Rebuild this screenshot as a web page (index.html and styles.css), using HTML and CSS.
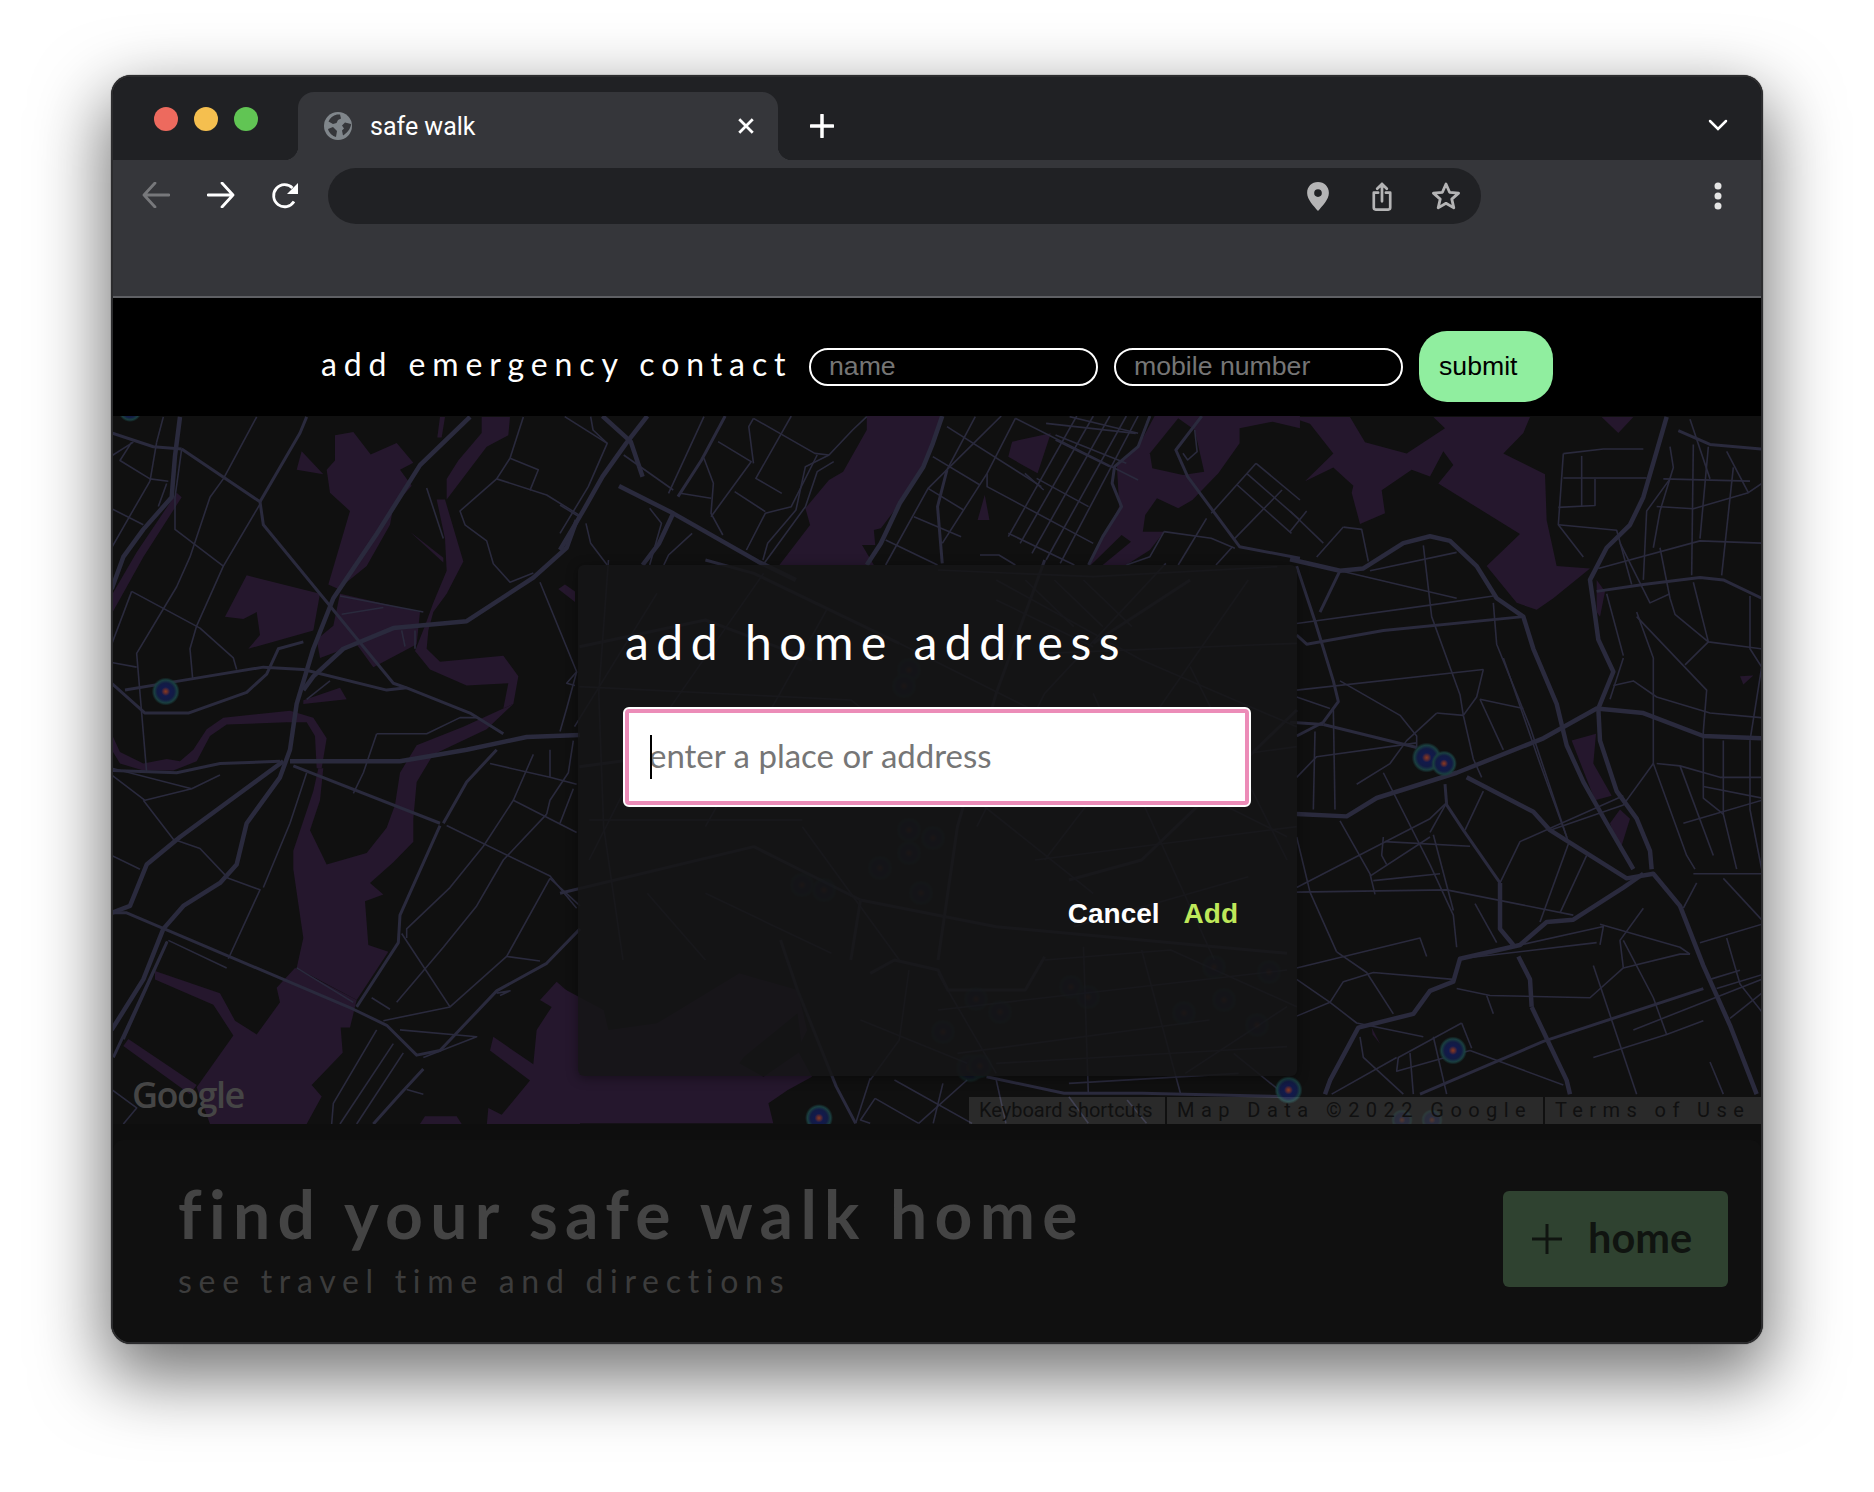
FILE: index.html
```html
<!DOCTYPE html>
<html lang="en">
<head>
<meta charset="utf-8">
<title>safe walk</title>
<link rel="stylesheet" href="styles.css">
</head>
<body>
<div class="stage">
<div class="window">
  <header class="tabstrip">
    <div class="lights"><i class="light red"></i><i class="light yellow"></i><i class="light green"></i></div>
    <div class="tab">
      <svg class="favicon" viewBox="0 0 28 28"><circle cx="14" cy="14" r="14" fill="#80868b"/><path d="M13 2.500C9 3.500 6 6 4.500 9.500L9 12l3.500-1 1.500-3 3-1.500-1-4zM27 12l-6-1.500-3 3 2 3-2 2 1 5c4-2.500 8-7 8-11.500zM4 17l5-2 4 4-1 6c-3.500-1-7-4-8-8z" fill="#35363a"/></svg>
      <span class="tab-title">safe walk</span>
      <svg class="tab-close" viewBox="0 0 16 16"><path d="M2 2l12 12M14 2L2 14"/></svg>
    </div>
    <svg class="newtab" viewBox="0 0 24 24"><path d="M12 1v22M1 12h22"/></svg>
    <svg class="chevron" viewBox="0 0 20 12"><path d="M2 2l8 8 8-8"/></svg>
  </header>
  <nav class="toolbar">
    <svg class="nav dim" viewBox="0 0 28 26"><path d="M27 13H2M13 1L2 13l11 12"/></svg>
    <svg class="nav" viewBox="0 0 28 26"><path d="M1 13h25M15 1l11 12-11 12"/></svg>
    <svg class="reload" viewBox="0 0 28 28"><path class="reload-arc" d="M23 19.500A11 11 0 1 1 21.500 6"/><path class="reload-head" d="M27 1v11H16z"/></svg>
    <div class="omnibox">
      <svg class="omni-icon" viewBox="0 0 22 28"><path fill-rule="evenodd" d="M11 0c6 0 10.500 4.500 10.500 10.500C21.500 17 15 23 11 28 7 23 .5 17 .5 10.500.5 4.500 5 0 11 0zm0 7a3.700 3.700 0 1 0 0 7.400A3.700 3.700 0 0 0 11 7z"/></svg>
      <svg class="omni-icon share" viewBox="0 0 22 30"><path class="line" d="M7 11H2.500v15.500q0 2 2 2h13q2 0 2-2V11H15M11 20V2M6 7l5-5 5 5"/></svg>
      <svg class="omni-icon star" viewBox="0 0 30 30"><path class="line" d="M15 3l3.600 8.300 9 .8-6.800 6 2 8.800L15 22.300l-7.800 4.600 2-8.800-6.800-6 9-.8z"/></svg>
    </div>
    <svg class="kebab" viewBox="0 0 8 28"><circle cx="4" cy="4" r="3.500"/><circle cx="4" cy="14" r="3.500"/><circle cx="4" cy="24" r="3.500"/></svg>
  </nav>
  <section class="contact">
    <span class="contact-label">add emergency contact</span>
    <input class="pill" placeholder="name">
    <input class="pill" placeholder="mobile number">
    <button class="submit">submit</button>
  </section>
  <main class="map">
    <svg class="map-canvas" viewBox="113 416 1648 708" width="1648" height="708">
      <defs>
        <radialGradient id="heat">
          <stop offset="0" stop-color="#8a3b1e"/>
          <stop offset=".14" stop-color="#5e2b30"/>
          <stop offset=".32" stop-color="#121a4c"/>
          <stop offset=".6" stop-color="#121b44"/>
          <stop offset=".82" stop-color="#1a3f40"/>
          <stop offset="1" stop-color="#1a3f40" stop-opacity="0"/>
        </radialGradient>
      </defs>
      <rect x="113" y="416" width="1648" height="708" class="ground"/>
      <!-- left part -->
      <g transform="translate(100 410) scale(.33333 .45918)">
        <g class="water">
          <path d="M705 55L760 48 812 97 890 72 940 115 900 130 935 165 880 210 870 250 800 340 715 390 685 380 750 220 690 180 680 130 705 110z"/>
          <path d="M605 90L670 140 590 130z"/>
          <path d="M440 360L660 400 640 480 445 520 480 490 470 440 430 455 375 450z"/>
          <path d="M720 400L960 440 950 510 820 560 770 510 660 540 650 500 700 470z"/>
          <path d="M610 632L720 605 740 630 610 640z"/>
          <path d="M1145 15L1230 15 1225 55 1160 80 1040 195 1040 150 1075 110 1145 50z"/>
          <path d="M1012 60L1020 15 1035 15 1025 60z"/>
          <path d="M1035 195L1090 330 1040 400 1000 440 985 480 980 520 1020 548 1210 535 1255 580 1240 640 1210 650 1225 595 1100 600 990 565 945 525 975 470 1000 420 1040 350 1035 280 1010 195z"/>
          <path d="M1210 650L1240 640 1160 695 1000 750 950 810 940 890 940 940 880 985 810 1030 850 1055 795 1070 805 1165 865 1180 770 1285 590 1215 610 1150 580 1000 580 960 640 830 655 780 670 780 660 850 630 915 680 990 800 965 860 910 885 860 900 790 950 730 1090 690z"/>
          <path d="M35 705L60 745 130 770 200 760 240 765 280 740 320 695 370 670 570 655 640 670 680 715 665 780 650 780 645 710 620 680 560 680 380 685 330 710 290 765 220 785 130 785 60 770 35 740z"/>
          <path d="M165 1222L360 1270 405 1330 470 1360 540 1290 530 1258 585 1215 770 1285 750 1345 722 1345 728 1400 635 1470 665 1495 620 1555 330 1555 290 1475 400 1362 340 1295 165 1240z"/>
          <path d="M85 1370L290 1470 270 1490 70 1385z"/>
          <path d="M1370 1245L1440 1290 1440 1560 1160 1560 1165 1520 1205 1535 1290 1460 1170 1395 1180 1365 1300 1425 1310 1350 1355 1300 1320 1285z"/>
          <path d="M960 1555L975 1538 1070 1538 1085 1555z"/>
          <path d="M38 440L38 400 110 310 230 180 245 190 130 320z"/>
          <path d="M1375 390L1395 380 1425 395 1425 418z"/>
          <path d="M930 265L1030 322 1030 332z"/>
        </g>
        <g class="rl">
          <path d="M1110 15L960 120 830 270 700 410 640 520 590 640 570 740 540 800 440 900 410 990 360 1030 250 1080 190 1130 130 1240 35 1350"/>
          <path d="M1430 240L1400 300 1300 365 1100 460 880 475 730 520 640 580 610 610"/>
          <path d="M35 1095L90 1080 140 990 240 930 550 765"/>
          <path d="M570 765L900 765 1100 740 1280 712 1440 708"/>
          <path d="M240 15L225 100 215 190 130 260 70 320 35 390"/>
        </g>
        <g class="rm">
          <path d="M35 1095L80 1095 760 1305 860 1340 950 1405 1020 1395 1190 1265 1340 1205 1440 1130"/>
          <path d="M580 775L1020 900"/>
          <path d="M35 595L135 660 265 660 440 615 500 575 535 520 610 505"/>
          <path d="M35 785L230 790 360 770 540 765"/>
          <path d="M245 85L480 200 490 250 660 400 880 595 920 605 1110 660 1210 705"/>
          <path d="M480 200L600 50 620 15"/>
          <path d="M75 610L280 585 490 560 610 565 860 610 920 605"/>
          <path d="M1020 905L900 1100 895 1160 770 1300"/>
          <path d="M1190 740L1100 810 1030 900"/>
          <path d="M970 1435L900 1490 820 1555"/>
          <path d="M70 1370L200 1160 40 1410"/>
          <path d="M35 50L160 80 245 85"/>
        </g>
        <g class="rs">
          <path d="M35 100L100 70"/><path d="M95 70L60 110 150 150 205 155"/><path d="M35 215L130 250"/><path d="M200 160L175 210"/><path d="M150 155L90 230 35 300"/><path d="M170 70L150 155"/><path d="M190 15L170 70"/>
          <path d="M245 85L225 190 225 260 370 340"/><path d="M370 150L330 190 270 320 230 385 110 530 125 660 140 790"/><path d="M470 15L370 150"/><path d="M480 205L370 340 290 470 270 520 278 585"/>
          <path d="M95 395L300 475 400 540 410 565"/><path d="M95 395L35 510"/><path d="M35 550L110 560"/>
          <path d="M1230 105L1315 130 1290 175"/><path d="M1230 105L1190 150 1080 220 1095 250 1160 285 1180 335 1230 375 1300 355"/><path d="M1270 15L1230 105"/><path d="M1190 150L1340 185 1440 230"/>
          <path d="M1320 375L1430 570 1400 595 1425 600"/><path d="M830 705L980 705 1080 670 1130 670"/><path d="M830 705L790 790 760 835"/><path d="M1430 570L1400 650 1380 700"/><path d="M1420 720L1405 790 1350 850 1340 880"/>
          <path d="M1300 750L1240 850 1150 950 1050 1040 920 1130 920 1150"/><path d="M1350 740L1350 800 1430 815"/><path d="M1170 770L1350 800"/><path d="M1240 850L1430 920"/><path d="M1420 825L1380 900"/><path d="M1340 880L1210 980 1130 1080 1030 1170 890 1290"/><path d="M1040 905L1350 1015 1430 1085"/><path d="M1350 1020L1220 1190 1050 1300 850 1330"/><path d="M905 1140L1050 1300"/>
          <path d="M35 970L120 1000"/><path d="M130 850L220 935 300 955 385 1020 480 1045 385 1195"/><path d="M35 795L135 850 275 825 360 795"/><path d="M35 780L275 825"/><path d="M620 790L570 900 490 1040"/><path d="M205 1155L380 1215"/><path d="M590 1215L760 1290"/><path d="M815 1280L870 1305"/><path d="M900 1350L1130 1365 970 1410"/><path d="M1220 1190L1320 1200"/><path d="M830 1350L700 1510 695 1555"/><path d="M880 1380L720 1555"/><path d="M910 1400L770 1555"/><path d="M920 1480L970 1490"/><path d="M35 1480L110 1520 70 1555"/><path d="M1190 1270L1230 1265 1200 1275"/>
          <path d="M720 405L970 440"/><path d="M725 445L850 430"/><path d="M905 480L915 515"/><path d="M945 480L945 520"/><path d="M980 170L1030 280"/><path d="M620 630L690 590"/><path d="M1440 1080L1350 1020"/>
        </g>
      </g>
      <!-- right part -->
      <g transform="translate(1290 410) scale(.33333 .45918)">
        <g class="water">
          <path d="M0 15L180 15 225 70 350 95 465 40 430 15 720 15 700 50 640 95 765 140 770 240 800 340 900 345 790 410 740 435 680 420 590 340 690 270 445 160 490 120 460 90 420 145 365 130 275 175 285 225 210 248 185 180 190 165 130 125 45 155 130 95 60 30 0 15z"/>
          <path d="M935 15L1030 15 985 50z"/><path d="M845 720L918 705 910 770 965 840 915 850z"/><path d="M960 900L990 870 1020 890 990 960z"/><path d="M245 1345L270 1380 248 1360z"/><path d="M1350 580L1390 578 1360 598z"/><path d="M920 370L945 395 930 450 920 440z"/>
        </g>
        <g class="rl">
          <path d="M1130 15L1100 90 1060 190 1020 250 950 300 900 370 910 420 925 500 970 570 925 650 930 720 980 830 1040 890 1080 960 1085 1000"/>
          <path d="M0 325L150 350 220 345 340 290 420 275 480 285 560 340 620 410 700 450 730 520 800 640 830 730 880 810 950 900 1030 1000"/>
          <path d="M20 880L170 885 260 845 500 790 760 715 920 650 1060 660 1240 710 1415 715"/>
          <path d="M530 800L730 875 780 915 1010 1020 1090 1010 1170 1080 1240 1210 1320 1340 1400 1490"/>
          <path d="M1060 1010L1000 1040 850 1110 770 1115 690 1165 510 1195 490 1245 420 1265 370 1315 205 1345 120 1460 105 1490"/>
          <path d="M725 1300L720 1240 685 1190"/><path d="M725 1300L830 1460 840 1490"/><path d="M630 1030L630 1130 670 1165"/>
        </g>
        <g class="rm">
          <path d="M20 710L100 680 145 635 130 590 75 460 20 340"/><path d="M100 685L380 735"/><path d="M0 680L100 685"/><path d="M465 815L470 860 520 915 630 1030"/><path d="M1165 45L1260 75 1415 85"/><path d="M390 1490L760 1375 1240 1260"/><path d="M920 395L1060 380 1230 365 1300 370 1415 410"/><path d="M20 490L50 510 280 480 700 450"/><path d="M90 440L150 350"/>
        </g>
        <g class="rs">
          <path d="M820 95L805 250 880 320"/><path d="M820 95L940 85 1060 85"/><path d="M875 100L875 210"/><path d="M805 212L915 208 915 150"/><path d="M820 148L1070 148"/><path d="M805 250L980 262 1025 380"/><path d="M1200 20L1260 150"/><path d="M1210 75L1205 360"/><path d="M1255 80L1230 280"/><path d="M1330 125L1295 360"/><path d="M1100 210L1210 215 1375 180 1415 160"/><path d="M1140 150L1070 220 1060 370"/><path d="M1120 150L1380 155"/><path d="M1140 80L1150 125 1110 220 1090 300"/><path d="M1310 90L1375 180"/><path d="M990 290L1080 420 1140 400"/><path d="M925 345L1230 285 1415 290"/><path d="M1110 300L1140 410 1155 445 1255 505 1415 520"/><path d="M1185 555L1255 505 1210 375"/><path d="M1040 440L1090 540 1090 770 1190 970 1215 1000"/><path d="M1040 450L1250 610 1240 700 1240 845 1300 880"/><path d="M1000 540L960 630"/><path d="M1000 535L950 400"/><path d="M970 600L1030 590 1100 625 1260 660 1415 670"/><path d="M1100 770L1170 775 1290 800 1415 800"/><path d="M1240 820L1415 845"/><path d="M1300 720L1300 880 1340 1000"/><path d="M1380 720L1380 870 1415 1000"/><path d="M1380 405L1380 520 1415 560 1380 720"/><path d="M1170 775L1270 970"/><path d="M1180 900L1415 850"/><path d="M1090 770L1000 860 780 915"/><path d="M1000 840L690 940 630 1030"/><path d="M835 945L750 1115"/><path d="M890 970L810 1095"/><path d="M720 690L835 940"/><path d="M640 540L750 770 830 930"/><path d="M610 420L620 510 720 690"/><path d="M580 565L560 625 520 665"/><path d="M570 630L700 650"/><path d="M570 630L640 740"/><path d="M520 665L550 760 575 800"/><path d="M400 295L425 450 510 620 520 665"/><path d="M20 465L420 425 610 405"/><path d="M20 610L580 565"/><path d="M20 625L120 650"/><path d="M150 590L330 665 380 710 380 735"/><path d="M20 800L80 755 380 725"/><path d="M75 700L70 870"/><path d="M130 650L135 870"/><path d="M150 350L500 410"/><path d="M240 350L500 310"/><path d="M160 255L215 260 235 330"/><path d="M80 320L160 255"/><path d="M0 220L100 290"/><path d="M0 265L50 220"/><path d="M440 660L520 665"/><path d="M440 660L350 720 300 770 200 815"/><path d="M280 790L420 990 490 1100 500 1170"/><path d="M150 895L240 1010 255 1055"/><path d="M20 930L60 1050 140 1180"/><path d="M20 1050L470 1045 850 1100"/><path d="M20 1040L420 890 470 855"/><path d="M420 920L470 855"/><path d="M280 930L275 970 290 990"/><path d="M285 940L540 950"/><path d="M240 1015L420 930"/><path d="M250 1025L450 1010"/><path d="M430 925L490 1090"/><path d="M525 915L580 830"/><path d="M555 1075L620 1160"/><path d="M20 1215L390 1150 410 1190"/><path d="M140 1180L230 1225 310 1315"/><path d="M20 1240L120 1290 160 1245 250 1225 490 1240"/><path d="M20 1320L120 1290 200 1335 400 1365"/><path d="M500 1260L600 1275 900 1280 1000 1215 990 1155 1060 1085"/><path d="M590 1275L610 1315"/><path d="M1000 1155L1090 1280 1130 1360"/><path d="M910 1210L1040 1490"/><path d="M1000 1215L1170 1185 1200 1185"/><path d="M690 1165L940 1125 930 1165"/><path d="M510 1195L920 1160"/><path d="M930 1120L1170 1170 1200 1185"/><path d="M1230 1160L1415 1120"/><path d="M1180 1085L1220 1030"/><path d="M1300 1020L1415 1110"/><path d="M1210 1010L1415 1010"/><path d="M1310 1150L1350 1250 1415 1310"/><path d="M1260 1240L1350 1220"/><path d="M1280 1260L1415 1230"/><path d="M1320 1325L1415 1270"/><path d="M1260 1420L1300 1490"/><path d="M910 1410L1130 1360 1240 1330"/><path d="M1030 1350L1415 1240"/><path d="M540 1395L820 1470"/><path d="M515 1335L325 1410 320 1440 540 1395"/><path d="M515 1335L545 1390"/><path d="M430 1365L470 1490"/><path d="M360 1400L370 1490"/><path d="M210 1365L220 1410 340 1490"/><path d="M320 1410L125 1490"/>
        </g>
      </g>
      <!-- top middle -->
      <g transform="translate(560 410) scale(.47192 .33333)">
        <g class="water">
          <path d="M650 18L810 18 770 170 720 280 680 355 665 360 668 405 640 405 665 465 465 465 530 345 520 295 570 210 600 185 650 60z"/>
          <path d="M958 95L1040 70 1012 190 980 165 950 140z"/>
          <path d="M885 330L900 255 910 330z"/>
          <path d="M1260 18L1225 110 1180 165 1185 290 1120 465 1200 465 1250 420 1280 365 1235 365 1240 315 1265 265 1310 295 1340 270 1395 190 1440 100 1440 55 1510 35 1568 55 1568 18z"/>
        </g>
        <g class="land">
          <path d="M1310 25L1250 130 1255 175 1320 195 1365 185 1345 60z"/>
          <path d="M1190 375L1210 395 1150 465 1125 465z"/>
        </g>
        <g class="rl">
          <path d="M90 18L150 95 175 200"/><path d="M125 228L240 310 420 455 500 510"/><path d="M185 18L140 100 90 200 50 300 0 420"/><path d="M810 18L790 100 770 170 720 280 680 400 650 465"/><path d="M240 310L210 400 175 465"/>
        </g>
        <g class="rm">
          <path d="M1250 18L1225 110 1175 170 1170 220 1190 290 1150 380 1120 465"/><path d="M1360 18L1305 120 1330 200 1440 410 1568 445"/><path d="M350 18L300 150 250 260"/><path d="M820 180L800 290 810 460"/>
        </g>
        <g class="rs">
          <path d="M10 20L100 100"/><path d="M65 20L70 60 100 100 60 230 0 370"/><path d="M135 135L240 240"/><path d="M305 20L230 250"/><path d="M410 25L400 50 410 160"/><path d="M410 25L540 130 570 135 620 60 650 20"/><path d="M490 18L415 205 470 250"/><path d="M335 95L405 155 320 320"/><path d="M305 145L325 220 320 310 345 375"/><path d="M255 250L320 265"/><path d="M370 245L435 305"/><path d="M570 135L520 170 500 300 440 400 430 450"/><path d="M545 135L490 290 435 310 395 420"/><path d="M580 155L545 185 520 290 430 465"/><path d="M0 285L40 320"/><path d="M55 340L65 400 100 465"/><path d="M190 295L215 340 190 465"/><path d="M280 370L230 435 220 465"/>
          <path d="M820 50L1020 230"/><path d="M880 20L820 180"/><path d="M935 18L780 235 690 465"/><path d="M965 25L905 190 810 400"/><path d="M965 25L1225 210"/><path d="M1030 40L1220 70"/>
          <path d="M1095 18L950 380"/><path d="M1130 18L975 400"/><path d="M1165 18L1000 430"/><path d="M1200 18L1030 450"/><path d="M1225 18L1060 460"/><path d="M1080 20L1225 70"/><path d="M1050 75L1200 160"/><path d="M1050 90L1165 170"/><path d="M1010 205L1120 290"/><path d="M985 190L1025 240"/><path d="M790 140L890 225"/><path d="M905 190L905 230 1130 400"/><path d="M780 235L855 300"/><path d="M750 320L850 380"/><path d="M690 390L800 465"/><path d="M950 370L1090 465"/><path d="M890 435L930 435 965 465"/>
          <path d="M1280 365L1380 385 1430 415"/><path d="M1280 365L1250 440 1200 465"/><path d="M1370 325L1310 465"/><path d="M1425 410L1390 465"/><path d="M1475 160L1380 310"/><path d="M1475 160L1568 270"/><path d="M1455 190L1568 330"/><path d="M1435 225L1550 370"/><path d="M1530 240L1430 385"/><path d="M1345 60L1350 125 1330 150 1320 130"/>
        </g>
      </g>
      <!-- middle, behind the dialog -->
      <g transform="translate(560 560) scale(.48469 .33333)">
        <g class="rm">
          <path d="M300 0L400 40 700 250"/><path d="M1520 450L1300 760 1200 900 1050 960"/><path d="M40 620L350 560 720 560"/><path d="M0 1000L400 860 620 1020 900 1100 1500 1180"/>
          <path d="M1000 0L900 400 820 800 780 1200"/><path d="M620 1020L600 1200"/><path d="M40 260L300 180 520 300"/><path d="M1100 250L1300 60"/>
        </g>
        <g class="rs">
          <path d="M100 0L80 400 90 800 130 1200"/><path d="M200 100L30 500"/><path d="M420 40L200 500 60 900"/><path d="M550 150L300 800"/><path d="M900 60L1200 300 1520 500"/><path d="M1250 10L1000 400 860 800"/><path d="M1420 60L1200 520 1000 900"/><path d="M600 420L1100 1000"/><path d="M700 250L1500 830"/><path d="M1000 280L1520 250"/><path d="M820 700L1520 560"/><path d="M980 900L1520 800"/><path d="M1100 400L1350 1200"/><path d="M1300 320L1500 900"/><path d="M500 800L700 1200"/><path d="M60 780L500 780"/><path d="M780 30L1100 50 1480 20"/><path d="M900 120L1100 260"/><path d="M960 60L1060 200"/><path d="M1020 60L1120 200"/><path d="M1080 60L1180 200"/><path d="M1060 1100L1420 950"/><path d="M40 380L600 420"/><path d="M300 1000L560 1180"/><path d="M180 1000L300 1200"/>
        </g>
      </g>
      <!-- bottom middle -->
      <g transform="translate(560 940) scale(.48469 .33333)">
        <g class="water">
          <path d="M0 140L90 210 100 270 200 250 370 100 490 150 510 270 490 330 520 410 470 450 430 490 440 550 0 550z"/>
        </g>
        <g class="land">
          <path d="M380 350L490 220 500 330 420 410 370 370z"/>
        </g>
        <g class="rm">
          <path d="M455 0L490 150 570 440 610 550"/><path d="M880 410L1040 460 1200 460 1500 470"/><path d="M640 100L690 60 780 90 800 150 960 150 1000 50"/>
        </g>
        <g class="rs">
          <path d="M650 475L740 550"/><path d="M650 475L620 540 640 550"/><path d="M640 415L610 550"/><path d="M690 420L850 550"/><path d="M840 420L740 550"/><path d="M790 430L770 550"/><path d="M1050 430L1400 400"/><path d="M620 240L840 370"/><path d="M780 100L900 400"/><path d="M720 90L700 300 640 420"/><path d="M1080 20L1090 460"/><path d="M1200 30L1280 460"/><path d="M1000 60L1260 30 1520 200"/><path d="M780 210L1500 90"/><path d="M820 340L1340 240"/><path d="M900 370L1500 320"/><path d="M1390 340L1500 470"/><path d="M1500 200L1290 400"/><path d="M1170 480L1210 550"/><path d="M1050 470L1090 550"/><path d="M900 420L920 550"/>
        </g>
      </g>
      <g>
        <circle class="heat" cx="165.700" cy="691.500" r="14"/><circle class="heat" cx="1426.700" cy="757.600" r="15"/><circle class="heat" cx="1444" cy="763.500" r="13"/><circle class="heat" cx="1453" cy="1050.500" r="14"/><circle class="heat" cx="819" cy="1118" r="14"/><circle class="heat" cx="1288.500" cy="1090" r="14"/><circle class="heat" cx="130" cy="410" r="12"/>
      </g>
      <g class="heat-dim">
        <circle class="heat" cx="1402" cy="1120" r="11"/><circle class="heat" cx="1432" cy="1120" r="11"/><circle class="heat" cx="976" cy="999" r="13"/><circle class="heat" cx="1000" cy="1012" r="13"/><circle class="heat" cx="943" cy="1032" r="13"/><circle class="heat" cx="970" cy="1068" r="15"/><circle class="heat" cx="980" cy="1066" r="13"/><circle class="heat" cx="1071" cy="987" r="13"/><circle class="heat" cx="1088" cy="997" r="13"/><circle class="heat" cx="1184" cy="1013" r="13"/><circle class="heat" cx="1224" cy="1000" r="13"/><circle class="heat" cx="1257" cy="1025" r="13"/><circle class="heat" cx="1214" cy="967" r="13"/><circle class="heat" cx="1269" cy="972" r="13"/><circle class="heat" cx="909" cy="670" r="13"/><circle class="heat" cx="904" cy="686" r="13"/><circle class="heat" cx="909" cy="830" r="13"/><circle class="heat" cx="933" cy="838" r="13"/><circle class="heat" cx="909" cy="853" r="13"/><circle class="heat" cx="880" cy="868" r="13"/><circle class="heat" cx="824" cy="890" r="13"/><circle class="heat" cx="802" cy="885" r="13"/><circle class="heat" cx="921" cy="893" r="13"/>
      </g>
    </svg>
    <span class="google">Google</span>
    <div class="attribution">
      <span class="attr-item attr-keys">Keyboard shortcuts</span>
      <span class="attr-item attr-data">Map Data ©2022 Google</span>
      <span class="attr-item attr-terms">Terms of Use</span>
    </div>
    <div class="dialog">
      <h2 class="dialog-title">add home address</h2>
      <div class="address-box"><input class="address" placeholder="enter a place or address"></div>
      <div class="dialog-actions"><button class="action cancel">Cancel</button><button class="action add">Add</button></div>
    </div>
  </main>
  <section class="panel">
    <div class="panel-card">
      <div class="panel-text">
        <h1 class="panel-title">find your safe walk home</h1>
        <p class="panel-sub">see travel time and directions</p>
      </div>
      <button class="home-btn">
        <svg class="home-plus" viewBox="0 0 30 30"><path d="M15 0v30M0 15h30"/></svg>
        <span>home</span>
      </button>
    </div>
  </section>
</div>
</div>
</body>
</html>
```
FILE: styles.css
```css
* { box-sizing: border-box; }
html, body { margin: 0; height: 1492px; overflow: hidden; background: #fff; }
.stage { padding: 75px 0 0 111px; }
.window {
  width: 1652px; height: 1269px; border: 2px solid #2c2c2e; border-radius: 20px; overflow: hidden;
  display: flex; flex-direction: column; background: #101010;
  box-shadow: 0 28px 70px 6px rgba(0,0,0,.55), 0 0 1px #000;
  font-family: "Liberation Sans", Arial, sans-serif;
}
/* tab strip */
.tabstrip { height: 83px; flex: none; background: #202124; display: flex; align-items: flex-start; position: relative; }
.lights { display: flex; gap: 16px; margin: 30px 0 0 41px; }
.light { display: block; width: 24px; height: 24px; border-radius: 50%; }
.red { background: #ed6a5e; } .yellow { background: #f5bf4f; } .green { background: #61c554; }
.tab { width: 480px; height: 68px; margin: 15px 0 0 40px; background: #35363a; border-radius: 16px 16px 0 0; display: flex; align-items: center; padding: 0 23px 0 26px; position: relative; }
.tab::before, .tab::after { content: ""; position: absolute; bottom: 0; width: 14px; height: 14px; }
.tab::before { left: -14px; background: radial-gradient(circle at 0 0, transparent 14px, #35363a 14.500px); }
.tab::after { right: -14px; background: radial-gradient(circle at 100% 0, transparent 14px, #35363a 14.500px); }
.favicon { width: 28px; height: 28px; flex: none; }
.tab-title { margin-left: 18px; color: #fff; font: 400 25px "Roboto", sans-serif; flex: 1; }
.tab-close { width: 18px; height: 18px; fill: none; stroke: #fff; stroke-width: 2.500; }
.newtab { width: 24px; height: 24px; margin: 37px 0 0 32px; fill: none; stroke: #fff; stroke-width: 3.500; stroke-linecap: round; }
.chevron { width: 20px; height: 12px; margin: 42px 33px 0 auto; fill: none; stroke: #fff; stroke-width: 2.500; stroke-linecap: round; }
/* toolbar */
.toolbar { height: 138px; flex: none; background: #35363a; border-bottom: 2px solid #5f6064; display: flex; align-items: flex-start; }
.nav { width: 28px; height: 26px; margin: 22px 0 0 37px; fill: none; stroke: #fff; stroke-width: 2.800; stroke-linecap: round; stroke-linejoin: round; }
.nav.dim { margin-left: 29px; stroke: #77787b; }
.reload { width: 28px; height: 28px; margin: 22px 0 0 36px; }
.reload-arc { fill: none; stroke: #fff; stroke-width: 2.800; }
.reload-head { fill: #fff; }
.omnibox { width: 1153px; height: 56px; margin: 8px 0 0 29px; border-radius: 28px; background: #202124; display: flex; align-items: center; justify-content: flex-end; gap: 34px; padding-right: 20px; }
.omni-icon { width: 30px; height: 29px; fill: #b4b4b5; }
.omni-icon.star { height: 30px; }
.line { fill: none; stroke: #b4b4b5; stroke-width: 2.800; stroke-linejoin: round; stroke-linecap: round; }
.kebab { width: 8px; height: 28px; margin: 22px 0 0 233px; fill: #e4e4e4; }
/* contact bar */
.contact { height: 118px; flex: none; background: #000; display: flex; align-items: center; padding: 19px 0 0 208px; }
.contact-label { width: 488px; color: #fff; font: 400 32px "Lato", sans-serif; letter-spacing: 6.900px; margin-top: -6px; white-space: nowrap; }
.pill { width: 289px; height: 38px; margin: 0 16px 0 0; border: 2px solid #fff; border-radius: 19px; background: #000; padding: 0 18px; color: #fff; font: 26.670px "Liberation Sans", Arial, sans-serif; }
.pill::placeholder { color: #757575; opacity: 1; }
.submit { width: 134px; height: 71px; border: 0; border-radius: 28px; background: #90ee9f; color: #000; font: 26.670px "Liberation Sans", Arial, sans-serif; padding: 0 20px; text-align: left; }
/* map */
.map { height: 708px; flex: none; position: relative; overflow: hidden; background: #101010; }
.map-canvas { display: block; }
.ground { fill: #101010; }
.water path { fill: #25172d; }
.land path { fill: #101010; }
.rl path, .rm path, .rs path { fill: none; stroke: #2a2a3d; vector-effect: non-scaling-stroke; stroke-linejoin: round; }
.rl path { stroke-width: 4.500; }
.rm path { stroke-width: 3; }
.rs path { stroke-width: 1.600; }
.heat { fill: url(#heat); }
.heat-dim { opacity: .4; }
.google { position: absolute; left: 19px; bottom: 7px; color: #454545; font: 600 36px "Open Sans", sans-serif; letter-spacing: -1.500px; line-height: 44px; }
.attribution { position: absolute; right: 0; bottom: 0; height: 27px; display: flex; background: rgba(255,255,255,.11); color: #101010; font: 400 20px/27px "Roboto", sans-serif; }
.attr-item { padding: 0 0 0 10px; white-space: nowrap; overflow: hidden; }
.attr-item + .attr-item { border-left: 2px solid #101010; }
.attr-keys { width: 196px; }
.attr-data { width: 378px; letter-spacing: 6.450px; }
.attr-terms { width: 218px; letter-spacing: 6.400px; }
.dialog { position: absolute; left: 465px; top: 149px; width: 719px; height: 511px; background: rgba(21,21,22,.86); border-radius: 6px; box-shadow: 0 2px 12px rgba(0,0,0,.4); padding: 0 48px 0 45px; display: flex; flex-direction: column; }
.dialog-title { margin: 47px 0 0 2px; color: #fff; font: 400 48px/60px "Lato", sans-serif; letter-spacing: 7.500px; white-space: nowrap; }
.address-box { margin-top: 35px; height: 100px; border: 2px solid #fff; border-radius: 6px; background: #fff; position: relative; width: 628px; }
.address-box::after { content: ""; position: absolute; left: 25px; top: 26px; width: 2px; height: 44px; background: #000; }
.address { display: block; width: 100%; height: 100%; border: 4px solid #ec8cb8; border-radius: 4px; outline: 0; padding: 0 0 4px 20px; font: 400 33px "Lato", sans-serif; background: #fff; }
.address::placeholder { color: #767676; opacity: 1; }
.dialog-actions { display: flex; justify-content: flex-end; gap: 24px; margin: 89px 11px 0 0; }
.action { border: 0; padding: 0; background: none; font: 700 28px/36px "Liberation Sans", Arial, sans-serif; color: #fff; }
.action.add { color: #bfe85a; }
/* bottom panel */
.panel { flex: 1; background: #0e0e0e; padding-top: 16px; display: flex; }
.panel-card { flex: 1; background: #101010; border-radius: 10px 10px 0 0; display: flex; align-items: center; justify-content: space-between; padding: 0 33px 0 65px; }
.panel-text { margin-top: -5px; }
.panel-title { margin: 0; color: #444; font: 700 66px/76px "Lato", sans-serif; letter-spacing: 7.300px; white-space: nowrap; }
.panel-sub { margin: 9px 0 0; color: #3c3c3c; font: 400 32px/40px "Lato", sans-serif; letter-spacing: 6.700px; white-space: nowrap; }
.home-btn { width: 225px; height: 96px; margin-top: -4px; border: 0; border-radius: 6px; background: #2f4230; color: #101410; display: flex; align-items: center; padding: 0 0 4px 29px; gap: 26px; font: 700 41.500px "Lato", sans-serif; }
.home-plus { width: 30px; height: 30px; margin-top: 4px; fill: none; stroke: #101410; stroke-width: 3; }
```
